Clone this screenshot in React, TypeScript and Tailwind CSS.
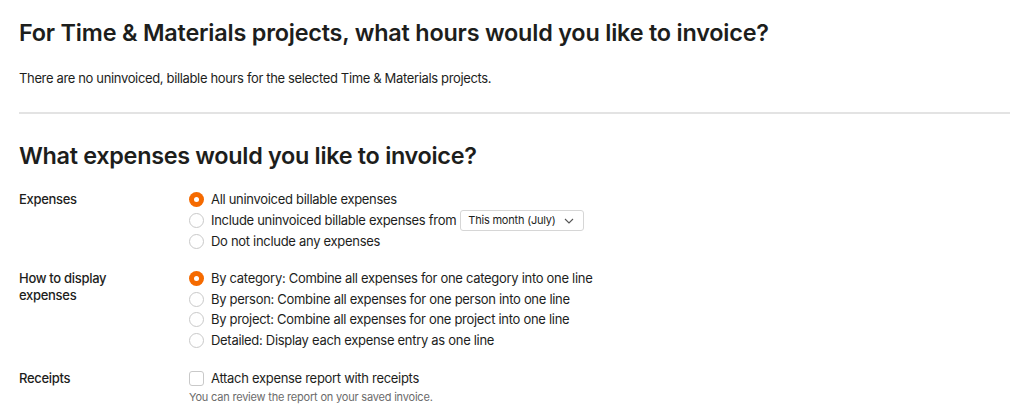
import React, { useState } from 'react';

const font = "font-['Inter','Liberation_Sans',sans-serif]";

function Radio({ checked, onClick }: { checked: boolean; onClick: () => void }) {
  return (
    <span
      onClick={onClick}
      className={`inline-flex h-[15px] w-[15px] shrink-0 items-center justify-center rounded-full ${
        checked ? 'bg-[#f56a00]' : 'border border-[#c9c9c9] bg-white'
      }`}
    >
      {checked && <span className="h-[5px] w-[5px] rounded-full bg-white" />}
    </span>
  );
}

function RadioRow({
  label,
  checked,
  onClick,
  children,
}: {
  label: string;
  checked: boolean;
  onClick: () => void;
  children?: React.ReactNode;
}) {
  return (
    <div className="flex h-[21px] items-center gap-[7px]">
      <Radio checked={checked} onClick={onClick} />
      <span className="cursor-pointer" onClick={onClick}>
        {label}
      </span>
      {children}
    </div>
  );
}

export default function App() {
  const [expenses, setExpenses] = useState(0);
  const [display, setDisplay] = useState(0);
  const [attach, setAttach] = useState(false);

  const expenseOptions = [
    'All uninvoiced billable expenses',
    'Include uninvoiced billable expenses from',
    'Do not include any expenses',
  ];
  const displayOptions = [
    'By category: Combine all expenses for one category into one line',
    'By person: Combine all expenses for one person into one line',
    'By project: Combine all expenses for one project into one line',
    'Detailed: Display each expense entry as one line',
  ];

  return (
    <div className={`min-h-[420px] w-[1020px] bg-white px-[19px] text-[#1d1e1c] ${font}`}>
      {/* Hours section */}
      <h2 className="pt-[19px] text-[23.4px] font-semibold leading-[28px] tracking-[-0.2px]">
        For Time &amp; Materials projects, what hours would you like to invoice?
      </h2>
      <p className="mt-[22px] text-[13px] leading-[18px] tracking-[-0.35px]">
        There are no uninvoiced, billable hours for the selected Time &amp; Materials projects.
      </p>

      <hr className="mt-[25px] w-[991px] border-t-2 border-[#e3e3e3]" />

      {/* Expenses section */}
      <h2 className="mt-[28px] text-[23.4px] font-semibold leading-[28px] tracking-[-0.3px]">
        What expenses would you like to invoice?
      </h2>

      <div className="mt-[19px] grid grid-cols-[170px_1fr] text-[13px] leading-[17px] tracking-[-0.3px]">
        <div className="pt-[2px] font-medium">Expenses</div>
        <div>
          {expenseOptions.map((opt, i) => (
            <RadioRow key={opt} label={opt} checked={expenses === i} onClick={() => setExpenses(i)}>
              {i === 1 && (
                <button className="ml-[-3px] flex h-[21px] w-[124px] items-center justify-between rounded-[3px] border border-[#d6d6d6] bg-white pl-[7px] pr-[9px] text-[11px] tracking-[-0.2px] text-[#1d1e1c]">
                  <span>This month (July)</span>
                  <svg width="10" height="6" viewBox="0 0 10 6" fill="none">
                    <path d="M1 1l4 4 4-4" stroke="#555" strokeWidth="1.1" />
                  </svg>
                </button>
              )}
            </RadioRow>
          ))}
        </div>

        <div className="mt-[16px] pt-[2px] font-medium">
          How to display
          <br />
          expenses
        </div>
        <div className="mt-[16px]">
          {displayOptions.map((opt, i) => (
            <div key={opt} className="h-[20.7px]">
              <RadioRow label={opt} checked={display === i} onClick={() => setDisplay(i)} />
            </div>
          ))}
        </div>

        <div className="mt-[17px] pt-[2px] font-medium">Receipts</div>
        <div className="mt-[17px]">
          <div className="flex h-[21px] items-center gap-[7px]">
            <span
              onClick={() => setAttach(!attach)}
              className={`h-[15px] w-[15px] shrink-0 rounded-[3px] border ${
                attach ? 'border-[#f56a00] bg-[#f56a00]' : 'border-[#c9c9c9] bg-white'
              }`}
            />
            <span>Attach expense report with receipts</span>
          </div>
          <p className="mt-[1px] text-[11px] leading-[14px] tracking-[-0.2px] text-[#6b6b6b]">
            You can review the report on your saved invoice.
          </p>
        </div>
      </div>
    </div>
  );
}
